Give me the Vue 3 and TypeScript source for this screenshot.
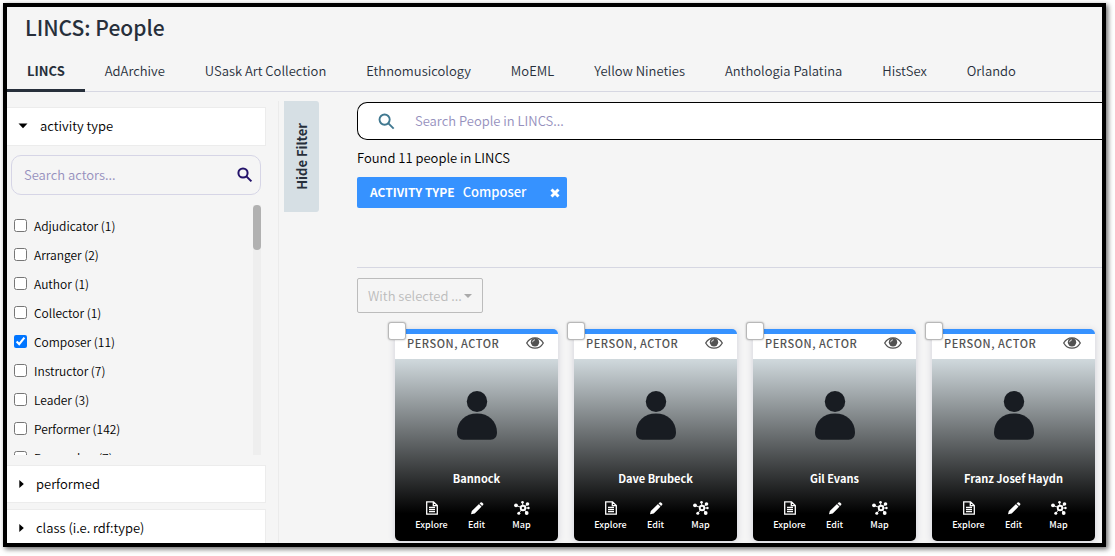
<script setup lang="ts">
import { ref } from 'vue'

interface Activity {
  name: string
  count: number
  checked: boolean
}

const tabs: string[] = [
  'LINCS',
  'AdArchive',
  'USask Art Collection',
  'Ethnomusicology',
  'MoEML',
  'Yellow Nineties',
  'Anthologia Palatina',
  'HistSex',
  'Orlando',
]
const activeTab = ref('LINCS')

const activities = ref<Activity[]>([
  { name: 'Adjudicator', count: 1, checked: false },
  { name: 'Arranger', count: 2, checked: false },
  { name: 'Author', count: 1, checked: false },
  { name: 'Collector', count: 1, checked: false },
  { name: 'Composer', count: 11, checked: true },
  { name: 'Instructor', count: 7, checked: false },
  { name: 'Leader', count: 3, checked: false },
  { name: 'Performer', count: 142, checked: false },
  { name: 'Researcher', count: 7, checked: false },
])

const people: string[] = ['Bannock', 'Dave Brubeck', 'Gil Evans', 'Franz Josef Haydn']
</script>

<template>
  <div class="page">
    <div class="frame">
      <header>
        <h1>LINCS: People</h1>
        <nav class="tabs">
          <a
            v-for="tab in tabs"
            :key="tab"
            href="#"
            class="tab"
            :class="{ active: tab === activeTab }"
            @click.prevent="activeTab = tab"
            >{{ tab }}</a
          >
        </nav>
      </header>

      <div class="body">
        <aside class="sidebar">
          <button class="facet open" type="button" aria-expanded="true">
            <svg class="caret-down" viewBox="0 0 10 6" aria-hidden="true"><path d="M0.5 0.5h9L5 5.3z" /></svg>
            activity type
          </button>
          <div class="facet-search">
            <input type="text" placeholder="Search actors..." aria-label="Search actors" />
            <svg viewBox="0 0 16 16" aria-hidden="true">
              <circle cx="6" cy="6" r="4.6" />
              <path d="M9.4 9.4l5 5" />
            </svg>
          </div>
          <div class="facet-list">
            <ul>
              <li v-for="item in activities" :key="item.name">
                <label>
                  <input v-model="item.checked" type="checkbox" />
                  <span>{{ item.name }} ({{ item.count }})</span>
                </label>
              </li>
            </ul>
            <div class="track"><div class="thumb"></div></div>
          </div>
          <button class="facet" type="button" aria-expanded="false">
            <svg class="caret-right" viewBox="0 0 5 8" aria-hidden="true"><path d="M0.3 0v8L4.8 4z" /></svg>
            performed
          </button>
          <button class="facet" type="button" aria-expanded="false">
            <svg class="caret-right" viewBox="0 0 5 8" aria-hidden="true"><path d="M0.3 0v8L4.8 4z" /></svg>
            class (i.e. rdf:type)
          </button>
        </aside>

        <button class="hide-filter" type="button"><span>Hide Filter</span></button>

        <main>
          <div class="search">
            <svg viewBox="0 0 18 18" aria-hidden="true">
              <circle cx="7" cy="7" r="5.4" />
              <path d="M11 11l5.6 5.6" />
            </svg>
            <input type="text" placeholder="Search People in LINCS..." aria-label="Search People in LINCS" />
          </div>
          <p class="found">Found 11 people in LINCS</p>
          <div class="filters">
            <div class="chip">
              <strong>ACTIVITY TYPE</strong>
              <span>Composer</span>
              <button type="button" aria-label="Remove filter">
                <svg viewBox="0 0 10 10" aria-hidden="true"><path d="M1.5 1.5l7 7M8.5 1.5l-7 7" /></svg>
              </button>
            </div>
          </div>
          <button class="with-selected" type="button" disabled>
            With selected ...
            <svg viewBox="0 0 8 4" aria-hidden="true"><path d="M0 0h8L4 4z" /></svg>
          </button>

          <div class="cards">
            <article v-for="person in people" :key="person" class="card">
              <input class="pick" type="checkbox" :aria-label="'Select ' + person" />
              <div class="card-head">
                <span>PERSON, ACTOR</span>
                <svg viewBox="0 0 18 12" aria-hidden="true">
                  <path class="lid" d="M0.7 6C4.6 -0.9 13.4 -0.9 17.3 6C13.4 12.9 4.6 12.9 0.7 6z" />
                  <circle cx="9" cy="5.2" r="4.2" />
                  <path class="glint" d="M6.6 5.2A2.5 2.5 0 0 1 9 2.8" />
                </svg>
              </div>
              <div class="card-body">
                <svg class="avatar" viewBox="0 0 40 49" aria-hidden="true">
                  <ellipse cx="20" cy="10.5" rx="10.2" ry="10.5" />
                  <path d="M0 41.5C0 30 8.5 22.5 20 22.5S40 30 40 41.5C40 46 37.5 48.7 33.5 48.7H6.5C2.5 48.7 0 46 0 41.5z" />
                </svg>
                <h2>{{ person }}</h2>
                <div class="actions">
                  <a href="#">
                    <svg viewBox="0 0 14 14" aria-hidden="true">
                      <path class="line" d="M1.7 0.8H8.5L12.3 4.5V13.2H1.7zM8.3 1V4.7H12M4 6.5h6M4 8.6h6M4 10.7h6" />
                    </svg>
                    Explore
                  </a>
                  <a href="#">
                    <svg viewBox="0 0 14 14" aria-hidden="true">
                      <path d="M9.5 2.6L10.6 1.5Q11.3 0.9 12 1.5L13.100 2.600Q13.700 3.300 13.100 4L12 5.100zM9 3L11.600 5.600L4.700 12.600L1 13.300L1.800 10z" />
                      <path class="seam" d="M9.200 2.800L11.800 5.400" />
                    </svg>
                    Edit
                  </a>
                  <a href="#">
                    <svg viewBox="0 0 16 14" aria-hidden="true">
                      <path class="line thin" d="M9 7L2 4.5M9 7L8.5 1.5M9 7L14 3M9 7H14.5M9 7L13 12M9 7L5 12" />
                      <circle cx="9" cy="7" r="3.2" />
                      <circle cx="2" cy="4.3" r="1.9" />
                      <circle cx="8.5" cy="1.3" r="1.3" />
                      <circle cx="13.5" cy="3" r="1.8" />
                      <circle cx="14.5" cy="7" r="1.2" />
                      <circle cx="12.7" cy="12" r="1.9" />
                      <circle cx="4.8" cy="12.2" r="1.5" />
                      <circle class="hole" cx="9" cy="7" r="1.3" />
                    </svg>
                    Map
                  </a>
                </div>
              </div>
            </article>
          </div>
        </main>
      </div>
    </div>
  </div>
</template>

<style>
body {
  margin: 0;
  background: #fff;
}
</style>

<style scoped>
* {
  box-sizing: border-box;
}
.page {
  height: 100vh;
  padding: 3px 9px 9px 3px;
  font-family: 'Noto Sans CJK SC', 'Noto Sans', sans-serif;
  font-size: 13px;
  font-weight: 350;
  line-height: 20px;
  color: #000;
}
button,
input {
  font: inherit;
  color: inherit;
}
.frame {
  display: flex;
  flex-direction: column;
  height: 100%;
  overflow: hidden;
  border: 4px solid #000;
  background: #f5f5f5;
  box-shadow: 2px 2px 5px rgba(0, 0, 0, 0.6);
}
h1 {
  margin: 0;
  padding: 4px 18px 2px;
  font-size: 21px;
  line-height: 32px;
  font-weight: 500;
  color: #272f3b;
}
.tabs {
  display: flex;
  height: 47px;
  border-bottom: 1px solid #d6d7e2;
}
.tab {
  height: 47px;
  padding: 16px 20px 0;
  color: #272f3b;
  text-decoration: none;
  white-space: nowrap;
}
.tab.active {
  font-weight: 700;
  border-bottom: 3px solid #272f3b;
}
.body {
  display: flex;
  flex: 1;
  align-items: flex-start;
  min-height: 0;
  padding-top: 9px;
}
.sidebar {
  flex: none;
  width: 272px;
  height: 100%;
  padding: 6px 12px 0 0;
  overflow: hidden;
  border-right: 1px solid #ebebeb;
}
.facet {
  display: flex;
  align-items: center;
  gap: 12px;
  width: 100%;
  height: 38px;
  margin-bottom: 6px;
  padding: 0 12px;
  border: 1px solid #ececec;
  border-left: 0;
  background: #fff;
  text-align: left;
}
.facet.open {
  height: 39px;
  padding: 0 11px 2px;
  margin-bottom: 9px;
}
.caret-down {
  width: 10px;
  height: 6px;
}
.caret-right {
  width: 5px;
  height: 8px;
}
.facet-search {
  display: flex;
  align-items: center;
  height: 40px;
  margin: 0 5px 10px 4px;
  padding: 0 7px 0 12px;
  border: 1px solid #d6d5e6;
  border-radius: 10px;
}
.facet-search input,
.search input {
  flex: 1;
  min-width: 0;
  padding: 0;
  border: 0;
  outline: 0;
  background: transparent;
}
input::placeholder {
  color: #9590bd;
  opacity: 1;
}
.facet-search svg {
  width: 16px;
  height: 16px;
  fill: none;
  stroke: #24136b;
  stroke-width: 2;
}
.facet-list {
  display: flex;
  height: 250px;
  margin: 0 5px 10px 4px;
  overflow: hidden;
}
.facet-list ul {
  flex: 1;
  margin: 0;
  padding: 6px 0 0 3px;
  list-style: none;
}
.facet-list label {
  display: flex;
  align-items: center;
  gap: 7px;
  height: 29px;
  font-size: 12px;
}
.facet-list input {
  width: 13px;
  height: 13px;
  margin: 0;
}
.track {
  width: 8px;
  background: #eee;
}
.thumb {
  height: 45px;
  border-radius: 4px;
  background: #b1b1b1;
}
.hide-filter {
  flex: none;
  display: flex;
  align-items: center;
  justify-content: center;
  width: 35px;
  height: 111px;
  margin-left: 5px;
  padding: 0;
  border: 0;
  border-radius: 0 3px 3px 0;
  background: #d6dfe4;
  color: #272f3b;
  font-weight: 700;
}
.hide-filter span {
  writing-mode: vertical-rl;
  transform: rotate(180deg);
}
main {
  flex: 1;
  min-width: 0;
  padding: 1px 0 0 38px;
}
.search {
  display: flex;
  align-items: center;
  gap: 20px;
  height: 38px;
  padding-left: 20px;
  border: 1px solid #000;
  border-right: 0;
  border-radius: 10px 0 0 10px;
  background: #fff;
}
.search svg {
  width: 17px;
  height: 17px;
  fill: none;
  stroke: #407890;
  stroke-width: 2;
}
.found {
  margin: 8px 0 9px;
}
.filters {
  height: 91px;
  border-bottom: 1px solid #d6d7e2;
}
.chip {
  display: inline-flex;
  align-items: center;
  gap: 8px;
  height: 31px;
  padding: 0 7px 2px 13px;
  border-radius: 2px;
  background: #3692ff;
  color: #fff;
}
.chip strong {
  font-size: 12px;
  font-weight: 700;
}
.chip span {
  font-weight: 500;
}
.chip button {
  display: flex;
  margin-left: 16px;
  padding: 2px 0 0;
  border: 0;
  background: none;
}
.chip svg {
  width: 10px;
  height: 10px;
  stroke: #fff;
  stroke-width: 3;
}
.with-selected {
  display: flex;
  align-items: center;
  gap: 2px;
  height: 35px;
  margin-top: 10px;
  padding: 0 10px;
  border: 1px solid #bcbcbc;
  border-radius: 2px;
  background: transparent;
  color: #bcbcbc;
}
.with-selected svg {
  width: 8px;
  height: 4px;
  fill: #aaa;
}
.cards {
  display: grid;
  grid-template-columns: repeat(4, 1fr);
  gap: 16px;
  padding: 16px 7px 0 38px;
}
.card {
  position: relative;
  border-top: 5px solid #3692ff;
  border-radius: 5px;
  background: #fff;
  box-shadow: 0 1px 6px rgba(90, 90, 130, 0.25);
}
.pick {
  position: absolute;
  top: -12px;
  left: -7px;
  width: 18px;
  height: 18px;
  margin: 0;
  appearance: none;
  border: 1px solid #b8b8b8;
  border-radius: 3px;
  background: #fff;
  box-shadow: 0 0 2px rgba(0, 0, 0, 0.3);
}
.card-head {
  display: flex;
  align-items: center;
  justify-content: space-between;
  height: 25px;
  padding: 0 14px 7px 12px;
  font-size: 11px;
  font-weight: 500;
  letter-spacing: 0.05em;
  color: #525252;
}
.card-head svg {
  width: 18px;
  height: 12px;
  fill: #525252;
}
.card-head .lid {
  fill: none;
  stroke: #525252;
  stroke-width: 1.3;
}
.card-head .glint {
  fill: none;
  stroke: #fff;
  stroke-width: 0.8;
}
.card-body {
  display: flex;
  flex-direction: column;
  align-items: center;
  height: 182px;
  padding-top: 32px;
  border-radius: 0 0 5px 5px;
  background: linear-gradient(#d0d9dd, #000 85%);
  color: #fff;
}
.avatar {
  width: 40px;
  height: 49px;
  fill: #181c22;
}
h2 {
  margin: 29px 0 14px;
  font-size: 11px;
  line-height: 18px;
  font-weight: 700;
}
.actions {
  display: grid;
  grid-template-columns: repeat(3, 45px);
}
.actions a {
  display: flex;
  flex-direction: column;
  align-items: center;
  color: #fff;
  font-size: 9px;
  line-height: 16px;
  font-weight: 500;
  text-decoration: none;
}
.actions svg {
  height: 14px;
  margin-bottom: 2px;
  fill: #fff;
}
.actions .line {
  fill: none;
  stroke: #fff;
  stroke-width: 1.3;
}
.actions .thin {
  stroke-width: 0.9;
}
.actions .seam {
  stroke: #111;
  stroke-width: 0.6;
}
.actions .hole {
  fill: #111;
}
</style>
